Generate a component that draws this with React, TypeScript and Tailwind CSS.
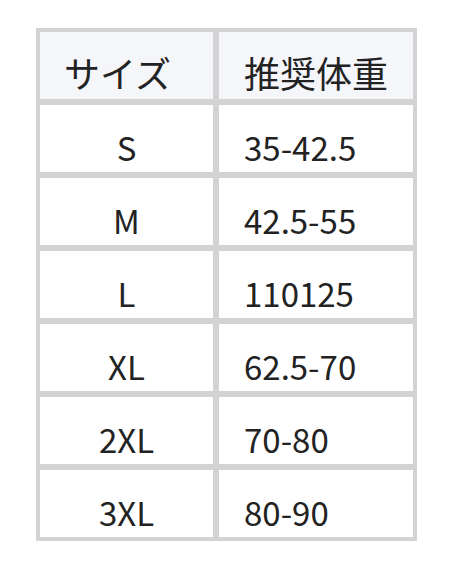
const rows = [
  { size: 'S', weight: '35-42.5' },
  { size: 'M', weight: '42.5-55' },
  { size: 'L', weight: '110125' },
  { size: 'XL', weight: '62.5-70' },
  { size: '2XL', weight: '70-80' },
  { size: '3XL', weight: '80-90' },
];

export default function App() {
  return (
    <div
      className="min-h-screen bg-white pt-[28px] pl-[36px]"
      style={{ fontFamily: '"Noto Sans CJK JP", "Noto Sans", sans-serif' }}
    >
      <div className="grid w-[381px] grid-cols-[173px_194px] gap-[6px] bg-[#d3d3d3] p-[4px] text-[#222]">
        {/* header */}
        <div className="flex h-[67px] items-end bg-[#f5f6fa] pb-[9px] pl-[24px] text-[36px] leading-none">
          サイズ
        </div>
        <div className="flex h-[67px] items-end bg-[#f5f6fa] pb-[9px] pl-[25px] text-[36px] leading-none">
          推奨体重
        </div>

        {rows.map((r) => (
          <div key={r.size} className="contents">
            <div className="flex h-[67px] items-end justify-center bg-white pb-[8px] text-[33px] leading-none">
              {r.size}
            </div>
            <div className="flex h-[67px] items-end bg-white pb-[8px] pl-[25px] text-[33px] leading-none">
              {r.weight}
            </div>
          </div>
        ))}
      </div>
    </div>
  );
}
